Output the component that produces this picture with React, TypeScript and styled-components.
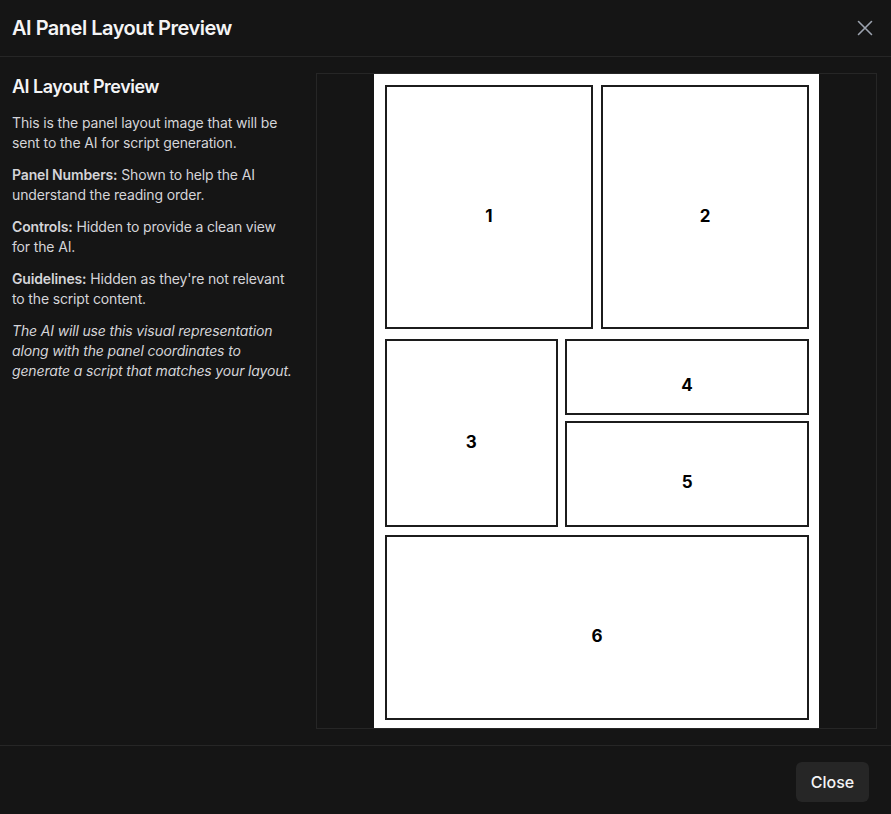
import styled, { createGlobalStyle } from 'styled-components';

const PAGE_W = 445;
const PAGE_H = 653;

interface Panel {
  id: number;
  x: number;
  y: number;
  w: number;
  h: number;
}

const panels: Panel[] = [
  { id: 1, x: 11, y: 11, w: 208, h: 244 },
  { id: 2, x: 227, y: 11, w: 208, h: 244 },
  { id: 3, x: 11, y: 265, w: 173, h: 187 },
  { id: 4, x: 191, y: 265, w: 244, h: 75 },
  { id: 5, x: 191, y: 346, w: 244, h: 106 },
  { id: 6, x: 11, y: 460, w: 424, h: 185 },
];

const GlobalStyle = createGlobalStyle`
  html, body {
    margin: 0;
    padding: 0;
    background: #151515;
  }
  body {
    font-family: Inter, "Noto Sans", "Liberation Sans", sans-serif;
    -webkit-font-smoothing: antialiased;
  }
`;

const Dialog = styled.div`
  height: 100vh;
  display: flex;
  flex-direction: column;
  background: #151515;
  color: #d4d4d8;
`;

const Header = styled.div`
  height: 56px;
  flex-shrink: 0;
  display: flex;
  align-items: center;
  justify-content: space-between;
  padding: 0 17px 0 12px;
  border-bottom: 1px solid #262626;
`;

const Title = styled.h2`
  margin: 0;
  font-size: 20px;
  font-weight: 600;
  color: #f4f4f5;
  letter-spacing: -0.5px;
`;

const CloseIcon = styled.button`
  width: 18px;
  height: 18px;
  padding: 0;
  border: 0;
  background: transparent;
  color: #9ca3af;
  display: flex;
  align-items: center;
  justify-content: center;
  cursor: pointer;
`;

const Body = styled.div`
  flex: 1;
  min-height: 0;
  display: flex;
  gap: 16px;
  padding: 16px 14px 16px 12px;
`;

const Sidebar = styled.div`
  width: 288px;
  box-sizing: border-box;
  padding-right: 4px;
  flex-shrink: 0;
`;

const SideTitle = styled.h3`
  margin: 0 0 12px;
  font-size: 18px;
  line-height: 28px;
  font-weight: 600;
  color: #f4f4f5;
  letter-spacing: -0.5px;
`;

const Paragraph = styled.p<{ $italic?: boolean }>`
  margin: 0 0 12px;
  font-size: 14px;
  line-height: 20px;
  color: #d4d4d8;
  letter-spacing: -0.15px;
  font-style: ${({ $italic }) => ($italic ? 'italic' : 'normal')};

  strong {
    font-weight: 600;
  }
`;

const PreviewBox = styled.div`
  flex: 1;
  min-width: 0;
  border: 1px solid #262626;
  display: flex;
  justify-content: center;
`;

const PageSheet = styled.div`
  position: relative;
  height: 100%;
  aspect-ratio: ${PAGE_W} / ${PAGE_H};
  background: #ffffff;
`;

const PanelFrame = styled.div`
  position: absolute;
  box-sizing: border-box;
  border: 2px solid #1c1c1c;
  display: flex;
  align-items: center;
  justify-content: center;
`;

const PanelNumber = styled.span`
  margin-top: 17px;
  font-size: 17px;
  font-weight: 700;
  color: #000000;
`;

const Footer = styled.div`
  height: 69px;
  flex-shrink: 0;
  border-top: 1px solid #262626;
  display: flex;
  justify-content: flex-end;
  align-items: flex-start;
  padding: 16px 22px 0 0;
  box-sizing: border-box;
`;

const CloseButton = styled.button`
  height: 40px;
  width: 73px;
  border: 0;
  border-radius: 6px;
  background: #262626;
  color: #f4f4f5;
  font-family: inherit;
  font-size: 16px;
  font-weight: 500;
  cursor: pointer;
`;

const pct = (v: number, total: number) => `${(v / total) * 100}%`;

export default function App() {
  return (
    <>
      <GlobalStyle />
      <Dialog>
        <Header>
          <Title>AI Panel Layout Preview</Title>
          <CloseIcon aria-label="Close">
            <svg width="16" height="16" viewBox="0 0 16 16" fill="none" stroke="currentColor" strokeWidth="1.6" strokeLinecap="round">
              <path d="M1.5 1.5l13 13M14.5 1.5l-13 13" />
            </svg>
          </CloseIcon>
        </Header>

        <Body>
          <Sidebar>
            <SideTitle>AI Layout Preview</SideTitle>
            <Paragraph>This is the panel layout image that will be sent to the AI for script generation.</Paragraph>
            <Paragraph>
              <strong>Panel Numbers:</strong> Shown to help the AI understand the reading order.
            </Paragraph>
            <Paragraph>
              <strong>Controls:</strong> Hidden to provide a clean view for the AI.
            </Paragraph>
            <Paragraph>
              <strong>Guidelines:</strong> Hidden as they're not relevant to the script content.
            </Paragraph>
            <Paragraph $italic>
              The AI will use this visual representation along with the panel coordinates to generate a script that matches your layout.
            </Paragraph>
          </Sidebar>

          <PreviewBox>
            <PageSheet>
              {panels.map((p) => (
                <PanelFrame
                  key={p.id}
                  style={{
                    left: pct(p.x, PAGE_W),
                    top: pct(p.y, PAGE_H),
                    width: pct(p.w, PAGE_W),
                    height: pct(p.h, PAGE_H),
                  }}
                >
                  <PanelNumber>{p.id}</PanelNumber>
                </PanelFrame>
              ))}
            </PageSheet>
          </PreviewBox>
        </Body>

        <Footer>
          <CloseButton>Close</CloseButton>
        </Footer>
      </Dialog>
    </>
  );
}
